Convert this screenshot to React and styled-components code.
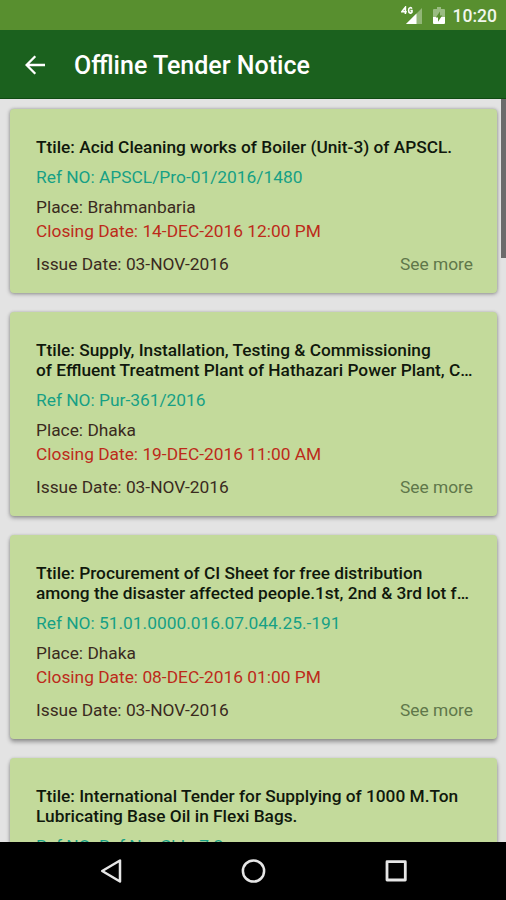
import React from "react";
import styled, { createGlobalStyle } from "styled-components";

const GlobalStyle = createGlobalStyle`
  * {
    box-sizing: border-box;
  }

  body {
    margin: 0;
    font-family: Roboto, "Liberation Sans", sans-serif;
    background: #000;
  }
`;

const Screen = styled.div`
  display: flex;
  flex-direction: column;
  width: 506px;
  height: 900px;
  overflow: hidden;
  background: #e3e3e3;
`;

const StatusBar = styled.div`
  display: flex;
  align-items: center;
  justify-content: flex-end;
  flex: none;
  height: 30px;
  padding: 2px 9px 0 0;
  background: #588f2f;
  color: #f1f6ec;

  svg {
    display: block;
  }
`;

const Clock = styled.span`
  margin-left: 8px;
  font-size: 17.5px;
  font-weight: 500;
  line-height: 22px;
`;

const BatteryIcon = styled.svg`
  margin: -2px 0 0 10px;
`;

const AppBar = styled.header`
  display: flex;
  align-items: center;
  flex: none;
  height: 69px;
  padding: 2px 25px 0;
  background: #1b611e;
  border-bottom: 1px solid #0f4a12;
  color: #fff;
`;

const PageTitle = styled.h1`
  margin: 2px 0 0 29px;
  font-size: 25px;
  font-weight: 500;
  line-height: 30px;
`;

const Content = styled.main`
  display: flex;
  flex: 1;
  min-height: 0;
  overflow: hidden;
`;

const List = styled.div`
  display: flex;
  flex-direction: column;
  flex: 1;
  gap: 19.5px;
  padding: 9.7px 4px 0 10px;
`;

const ScrollThumb = styled.div`
  flex: none;
  width: 5px;
  height: 159px;
  background: #6b6b6b;
`;

const Card = styled.article`
  flex: none;
  padding: 29.2px 24px 18.4px 26px;
  background: #c3da9b;
  border-radius: 4px;
  box-shadow: 0 ${props => props.depth}px 4px rgba(0, 0, 0, 0.34),
    0 0 3px rgba(0, 0, 0, 0.16);
`;

const CardTitle = styled.h2`
  margin: 0;
  font-size: 17.3px;
  font-weight: 500;
  line-height: 19.5px;
  white-space: pre;
  color: #10180c;
`;

const Line = styled.div`
  display: flex;
  justify-content: space-between;
  margin-top: ${props => props.mt}px;
  font-size: 17.35px;
  line-height: 20px;
  white-space: pre;
  color: ${props => props.color || "#3a2a1e"};
`;

const SeeMore = styled.span`
  color: #5f774a;
`;

const NavBar = styled.nav`
  display: flex;
  align-items: center;
  justify-content: space-between;
  flex: none;
  height: 58px;
  padding: 0 98px 0 99px;
  background: #000;
`;

const tenders = [
  {
    title: "Acid Cleaning works of Boiler (Unit-3) of APSCL.",
    refNo: "APSCL/Pro-01/2016/1480",
    place: "Brahmanbaria",
    closing: "14-DEC-2016 12:00 PM",
    issued: "03-NOV-2016"
  },
  {
    title:
      "Supply, Installation, Testing & Commissioning\nof Effluent Treatment Plant of Hathazari Power Plant, C…",
    refNo: "Pur-361/2016",
    place: "Dhaka",
    closing: "19-DEC-2016 11:00 AM",
    issued: "03-NOV-2016"
  },
  {
    title:
      "Procurement of CI Sheet for free distribution\namong the disaster affected people.1st, 2nd & 3rd lot f…",
    refNo: "51.01.0000.016.07.044.25.-191",
    place: "Dhaka",
    closing: "08-DEC-2016 01:00 PM",
    issued: "03-NOV-2016"
  },
  {
    title:
      "International Tender for Supplying of 1000 M.Ton\nLubricating Base Oil in Flexi Bags.",
    refNo: "Ref No: Chla-7.2",
    place: "Dhaka",
    closing: "08-DEC-2016 01:00 PM",
    issued: "03-NOV-2016"
  }
];

const Signal = () => (
  <svg width="22" height="20" viewBox="0 0 22 20">
    <path d="M21 2V18H5z" fill="#fff" opacity="0.35" />
    <path d="M15.5 7.5V18H5z" fill="#fff" />
    <g fill="none" stroke="#fff" strokeWidth="1.6">
      <path d="M4.4 8V1.2L.8 5.8h5" />
      <path d="M10.8 2.8C10.4 1.2 7.6 1 7.6 4.2s2.6 3.6 3.4 2V4.6H9.4" />
    </g>
  </svg>
);

const Battery = () => (
  <BatteryIcon width="12" height="19" viewBox="0 0 12 19">
    <path d="M4 1h4v2h3a1 1 0 0 1 1 1v7H0V4a1 1 0 0 1 1-1h3z" fill="#fff" opacity="0.4" />
    <path d="M0 11h12v6a1 1 0 0 1-1 1H1a1 1 0 0 1-1-1z" fill="#fff" />
    <path d="M7 5.5 2.8 11.6H5v4.2l4.2-6.2H7z" fill="#588f2f" />
  </BatteryIcon>
);

const TenderCard = ({ tender, depth }) => (
  <Card depth={depth}>
    <CardTitle>Ttile: {tender.title}</CardTitle>
    <Line mt={9.9} color="#16a085">
      Ref NO: {tender.refNo}
    </Line>
    <Line mt={10}>Place: {tender.place}</Line>
    <Line mt={4} color="#bd2a1a">
      Closing Date: {tender.closing}
    </Line>
    <Line mt={13}>
      <span>Issue Date: {tender.issued}</span>
      <SeeMore>See more</SeeMore>
    </Line>
  </Card>
);

const App = () => (
  <>
    <GlobalStyle />
    <Screen>
      <StatusBar>
        <Signal />
        <Battery />
        <Clock>10:20</Clock>
      </StatusBar>
      <AppBar>
        <svg width="20" height="20" viewBox="0 0 20 20">
          <path
            d="M20 10H2M10.3 1.2 1.6 10l8.7 8.8"
            fill="none"
            stroke="#fff"
            strokeWidth="2.3"
          />
        </svg>
        <PageTitle>Offline Tender Notice</PageTitle>
      </AppBar>
      <Content>
        <List>
          {tenders.map((tender, i) => (
            <TenderCard key={tender.refNo} tender={tender} depth={i + 1} />
          ))}
        </List>
        <ScrollThumb />
      </Content>
      <NavBar>
        <svg width="24" height="26" viewBox="0 0 24 26">
          <path
            d="M21 2.5v21L3.2 13z"
            fill="none"
            stroke="#e6e6e6"
            strokeWidth="2.5"
            strokeLinejoin="round"
          />
        </svg>
        <svg width="26" height="26" viewBox="0 0 26 26">
          <circle cx="12.5" cy="13" r="10.6" fill="none" stroke="#e6e6e6" strokeWidth="2.5" />
        </svg>
        <svg width="24" height="26" viewBox="0 0 24 26">
          <rect
            x="3"
            y="3.7"
            width="18.3"
            height="18.3"
            fill="none"
            stroke="#e6e6e6"
            strokeWidth="2.8"
            strokeLinejoin="round"
          />
        </svg>
      </NavBar>
    </Screen>
  </>
);

export default App;
